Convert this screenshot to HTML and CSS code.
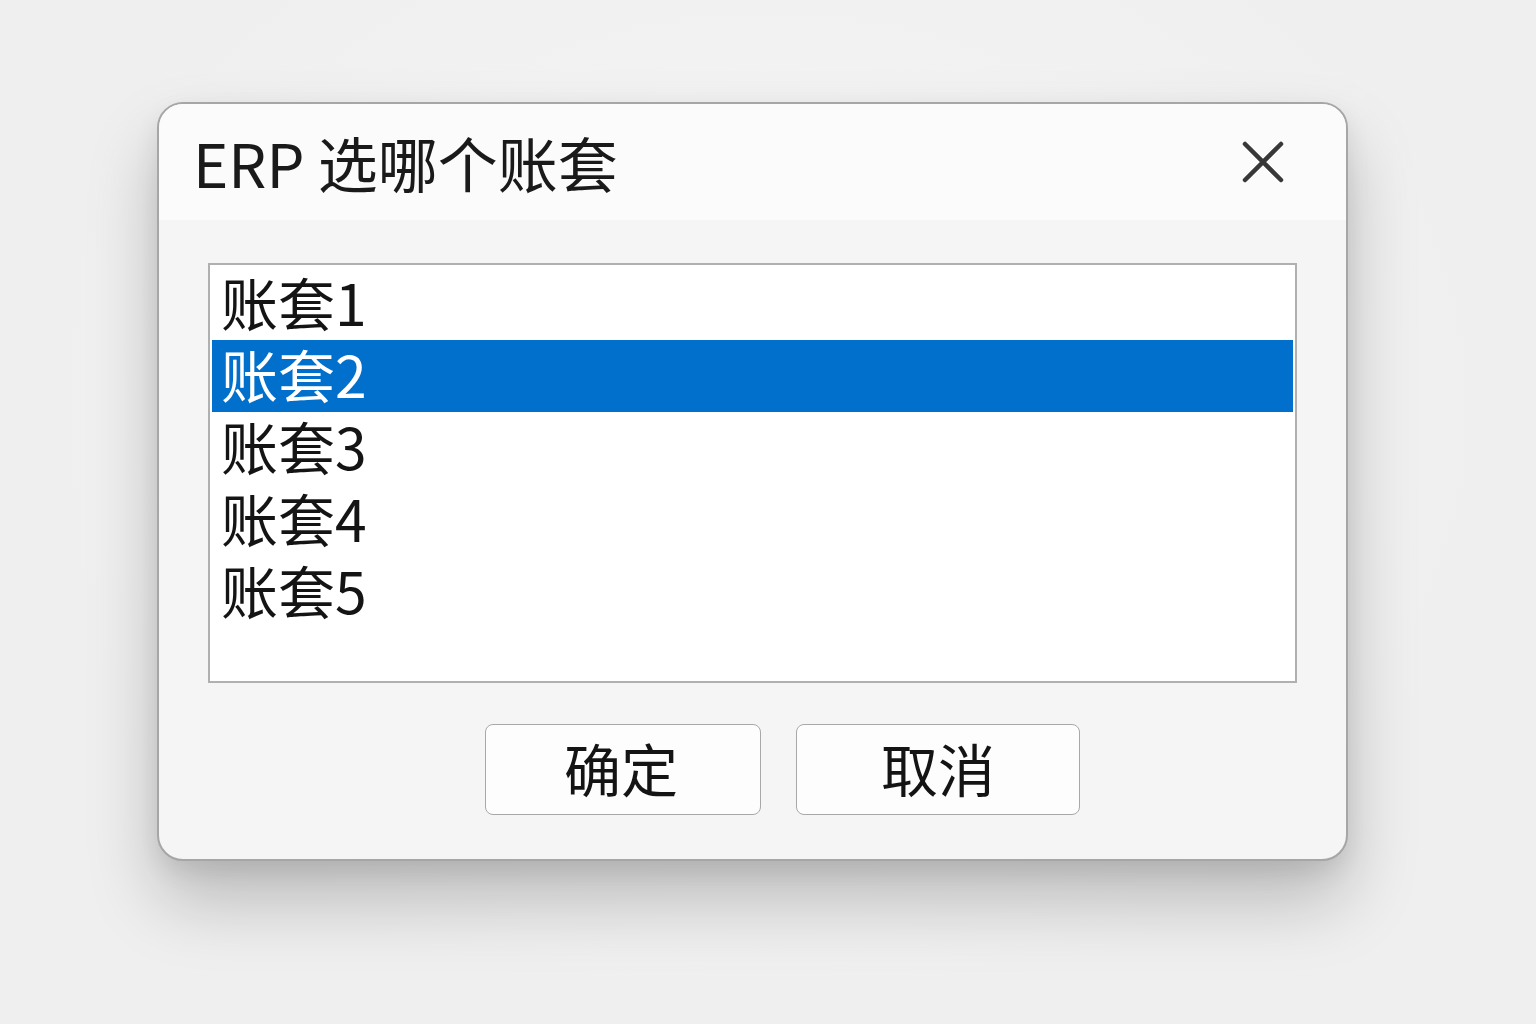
FILE: index.html
```html
<!DOCTYPE html>
<html lang="zh-CN">
<head>
  <meta charset="UTF-8" />
  <title>ERP 选哪个账套</title>
  <link rel="stylesheet" href="styles.css">
</head>
<body>

  <!-- Account set picker dialog -->
  <div class="dialog">
    <div class="titlebar">
      <div class="title">ERP 选哪个账套</div>
      <div class="close" title="关闭">
        <svg width="44" height="44" viewBox="0 0 44 44">
          <path d="M4 4 L40 40 M40 4 L4 40" stroke="#383838" stroke-width="4.5" stroke-linecap="round" fill="none" />
        </svg>
      </div>
    </div>

    <div class="content">
      <div class="listbox">
        <div class="item">账套1</div>
        <div class="item selected">账套2</div>
        <div class="item">账套3</div>
        <div class="item">账套4</div>
        <div class="item">账套5</div>
      </div>

      <div class="buttons">
        <div class="button ok-button">确定</div>
        <div class="button cancel-button">取消</div>
      </div>
    </div>
  </div>

</body>
</html>
```

FILE: styles.css
```css
body {
  font-family: "Noto Sans CJK SC", "Noto Sans", sans-serif;
  background-color: #f0f0f0;
  background-image: radial-gradient(ellipse at 50% 40%, #f6f6f6 0%, #efefef 70%);
  margin: 0;
  padding: 0;
  height: 1024px;
  overflow: hidden;
}

.dialog {
  box-sizing: border-box;
  width: 1191px;
  height: 759px;
  margin: 102px 0 0 157px;
  background-color: #f5f5f5;
  border: 2px solid #a6a6a6;
  border-radius: 26px;
  overflow: hidden;
  box-shadow: 0 40px 70px rgba(0, 0, 0, 0.22), 0 10px 24px rgba(0, 0, 0, 0.08);
}

/* Title bar */
.titlebar {
  height: 116px;
  background-color: #fbfbfb;
  display: flex;
  align-items: center;
  justify-content: space-between;
  padding: 0 61px 0 34px;
}

.title {
  font-size: 60px;
  color: #1a1a1a;
  margin-top: -2px;
}

.close {
  width: 44px;
  height: 44px;
  margin-top: 0;
  cursor: pointer;
}

.content {
  padding: 43px 49px 0 49px;
}

/* List of account sets */
.listbox {
  box-sizing: border-box;
  height: 420px;
  background-color: #fff;
  border: 2px solid #b0b0b0;
  padding: 3px 2px;
}

.item {
  height: 72px;
  line-height: 66px;
  font-size: 57px;
  color: #141414;
  padding-left: 9px;
}

.item.selected {
  background-color: #0070cc;
  color: #fff;
}

/* Dialog buttons */
.buttons {
  display: flex;
  justify-content: center;
  gap: 35px;
  margin-top: 41px;
  padding-left: 60px;
}

.button {
  box-sizing: border-box;
  height: 91px;
  line-height: 84px;
  background-color: #fdfdfd;
  border: 1.5px solid #a8a8a8;
  border-radius: 8px;
  text-align: center;
  font-size: 57px;
  color: #141414;
  cursor: pointer;
}

.ok-button {
  width: 276px;
  padding-right: 4px;
}

.cancel-button {
  width: 284px;
}

.button:hover {
  background-color: #eef4fb;
}
```
